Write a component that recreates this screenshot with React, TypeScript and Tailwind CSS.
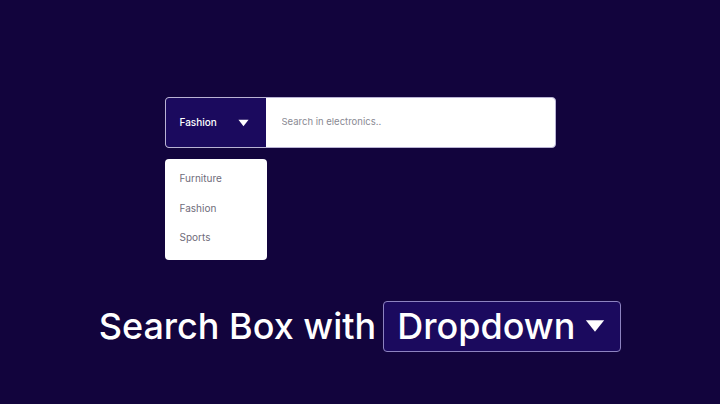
import { useState } from "react";

const categories = ["Furniture", "Fashion", "Sports"];

function Caret({ className }: { className: string }) {
  return (
    <svg viewBox="0 0 12 8" className={className} fill="currentColor">
      <path d="M0.5 0.5h11L6 7.5z" />
    </svg>
  );
}

export default function App() {
  const [selected] = useState("Fashion");

  return (
    <div className="flex h-[404px] w-[720px] flex-col items-center bg-[#12043d] font-['Inter',sans-serif]">
      <div className="mt-[97px] w-[391px]">
        <div className="flex h-[51px] overflow-hidden rounded-[4px] border border-[#b9b3d4] bg-white">
          <button className="flex w-[100px] items-center justify-between bg-[#1b0a5e] pl-[14px] pr-[17px] text-[10px] font-medium text-white">
            {selected}
            <Caret className="h-[8px] w-[11px]" />
          </button>
          <input
            className="flex-1 pl-[16px] text-[9.5px] text-gray-700 placeholder:text-[#8a8a93] outline-none"
            placeholder="Search in electronics.."
          />
        </div>

        <ul className="mt-[11px] flex w-[102px] flex-col gap-[11.5px] rounded-[4px] bg-white pt-[10px] pb-[14px] pl-[15px] text-[10px] text-[#6f6c7a]">
          {categories.map((c) => (
            <li key={c} className="leading-[18px]">
              {c}
            </li>
          ))}
        </ul>
      </div>

      <div className="mt-[39px] flex items-center gap-[7px] text-[36px] font-medium text-white">
        <span>Search Box with</span>
        <span className="flex h-[51px] items-center gap-[10px] rounded-[4px] border border-[#8d83c0] bg-[#1b0a5e] pl-[13px] pr-[15px]">
          Dropdown
          <Caret className="h-[14px] w-[20px]" />
        </span>
      </div>
    </div>
  );
}
